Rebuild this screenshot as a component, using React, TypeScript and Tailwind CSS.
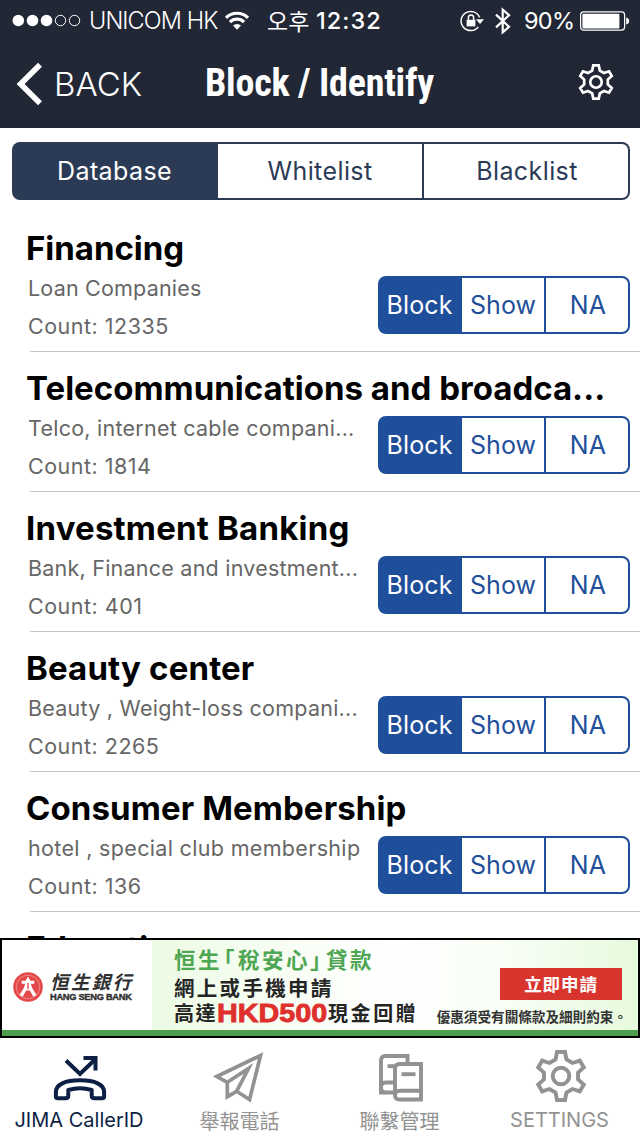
import type { ReactNode } from "react";

interface Category {
  title: string;
  detail: string;
  count: number;
  spacing: string;
  detailSpacing: string;
}

const categories: Category[] = [
  { title: "Financing", detail: "Loan Companies", count: 12335, spacing: "tracking-[-0.02px]", detailSpacing: "tracking-[0.2px]" },
  { title: "Telecommunications and broadca...", detail: "Telco, internet cable compani...", count: 1814, spacing: "tracking-[0.01px]", detailSpacing: "tracking-[0.24px]" },
  { title: "Investment Banking", detail: "Bank, Finance and investment...", count: 401, spacing: "tracking-[0.2px]", detailSpacing: "tracking-[0.23px]" },
  { title: "Beauty center", detail: "Beauty , Weight-loss compani...", count: 2265, spacing: "tracking-[0.15px]", detailSpacing: "tracking-[0.24px]" },
  { title: "Consumer Membership", detail: "hotel , special club membership", count: 136, spacing: "tracking-[0.1px]", detailSpacing: "tracking-[0.33px]" },
  { title: "Education", detail: "", count: 0, spacing: "tracking-[0.13px]", detailSpacing: "" },
];

const gearPoints = Array.from({ length: 6 }, (_, i) => {
  const a = (i * Math.PI) / 3;
  return [[-5.5, -16.5], [-4, -24], [4, -24], [5.5, -16.5]]
    .map(([x, y]) => `${(x * Math.cos(a) - y * Math.sin(a)).toFixed(2)},${(x * Math.sin(a) + y * Math.cos(a)).toFixed(2)}`)
    .join(" ");
}).join(" ");

function Gear({ className }: { className: string }) {
  return (
    <svg viewBox="-26 -26 52 52" className={className} fill="none" stroke="currentColor" strokeWidth="3.9">
      <polygon points={gearPoints} />
      <circle r="8.3" />
    </svg>
  );
}

function StatusBar() {
  return (
    <div className="flex h-[41px] items-center text-[23.5px] leading-[41px] text-white">
      <svg className="ml-3 h-[13px] w-[69px] shrink-0" viewBox="0 0 69 13">
        <g fill="#fff">
          <circle cx="6.3" cy="6.5" r="5.8" />
          <circle cx="20.5" cy="6.5" r="5.8" />
          <circle cx="34.5" cy="6.5" r="5.8" />
        </g>
        <g fill="none" stroke="#fff">
          <circle cx="48.5" cy="6.5" r="5.2" />
          <circle cx="62.5" cy="6.5" r="5.2" />
        </g>
      </svg>
      <span className="ml-[8px] w-[133px] shrink-0 whitespace-nowrap font-light tracking-[-0.9px]">UNICOM HK</span>
      <svg className="ml-[2px] h-[19px] w-[26px] shrink-0" viewBox="0 0 26 19" fill="none" stroke="#fff" strokeWidth="3.2">
        <path d="M2 6.800a15.600 15.600 0 0 1 22 0" />
        <path d="M5.900 11a10 10 0 0 1 14.200 0" />
        <path d="M13 18.800l-4-4.200a5.700 5.700 0 0 1 8 0z" fill="#fff" stroke="none" />
      </svg>
      <span className="ml-[17px] w-[49px] shrink-0 font-['Noto_Sans_CJK_KR'] text-[23px]">오후</span>
      <span className="w-[68px] shrink-0 font-medium tracking-[1.05px]">12:32</span>
      <svg className="ml-[75px] h-[24px] w-[26px] shrink-0" viewBox="0 0 26 24" fill="none" stroke="#fff" strokeWidth="1.5">
        <path d="M20.600 8.400a9.600 9.600 0 1 0-1.300 9.500" />
        <path d="M17 10.200h8l-4 4.700z" fill="#fff" stroke="none" />
        <path d="M7.600 10.800h8.800v6.600H7.600z" fill="#fff" stroke="none" />
        <path d="M9.400 11V8.600a2.600 2.600 0 0 1 5.200 0V11" />
      </svg>
      <svg className="ml-[9px] h-[28px] w-[17px] shrink-0" viewBox="0 0 17 28" fill="none" stroke="#fff" strokeWidth="2.2">
        <path d="M2 7.600l13 12.200-6.300 5.500V2.700l6.300 5.500L2 20.400" />
      </svg>
      <span className="ml-[13px] w-[55px] shrink-0 tracking-[-0.7px]">90%</span>
      <svg className="ml-[1px] h-[20px] w-[50px] shrink-0" viewBox="0 0 50 20">
        <rect x=".6" y=".9" width="44" height="18.2" rx="3" fill="none" stroke="#fff" strokeWidth="1.2" />
        <rect x="2.4" y="2.8" width="37" height="14.6" rx="1" fill="#fff" />
        <path d="M46.200 6.600q3 .8 3 3.400t-3 3.400z" fill="#fff" />
      </svg>
    </div>
  );
}

const segmentTheme = {
  tabs: {
    box: "w-[618px] text-[#2b3b56] tracking-[0.4px]",
    selected: "bg-[#2b3b56]",
    outline: "border-[#2b3b56]",
  },
  row: {
    box: "w-[252px] text-[#1f4f9a] tracking-[0.1px]",
    selected: "bg-[#1f4f9a]",
    outline: "border-[#1f4f9a]",
  },
};

function Segments({ labels, variant }: { labels: [string, string, string]; variant: "tabs" | "row" }) {
  const theme = segmentTheme[variant];
  return (
    <div className={`grid h-[58px] shrink-0 grid-cols-3 text-center text-[25px] leading-[58px] whitespace-nowrap ${theme.box}`}>
      <div className={`rounded-l-[8px] pr-px text-white ${theme.selected}`}>{labels[0]}</div>
      <div className={`border-y-2 border-r-2 leading-[54px] ${theme.outline}`}>{labels[1]}</div>
      <div className={`rounded-r-[8px] border-y-2 border-r-2 pl-[2px] leading-[54px] ${theme.outline}`}>{labels[2]}</div>
    </div>
  );
}

function Row({ item }: { item: Category }) {
  return (
    <section className="h-[140px] shrink-0 pt-4">
      <h2 className={`h-10 pl-[26px] text-[33px] leading-10 font-bold whitespace-nowrap text-black ${item.spacing}`}>{item.title}</h2>
      {item.detail && (
        <div className="flex h-[83px] justify-between pr-[10px] pl-[28px]">
          <div className="w-[340px] text-[21.5px] whitespace-nowrap text-[#666]">
            <p className={`h-[41px] leading-[41px] ${item.detailSpacing}`}>{item.detail}</p>
            <p className="leading-[35px] tracking-[0.5px]">Count: {item.count}</p>
          </div>
          <div className="pt-2">
            <Segments labels={["Block", "Show", "NA"]} variant="row" />
          </div>
        </div>
      )}
      <div className="ml-[30px] h-px bg-[#c4c4c6]" />
    </section>
  );
}

function Banner() {
  return (
    <div className="flex h-[100px] shrink-0 border-2 border-black bg-white font-['Noto_Sans_CJK_TC'] font-bold">
      <div className="flex w-full border-b-[6px] border-[#4d9f4d]">
        <div className="flex w-[150px] shrink-0 items-center pl-[11px]">
          <svg className="mt-1 h-[30px] w-[30px] shrink-0" viewBox="0 0 30 30">
            <circle cx="15" cy="15" r="14.8" fill="#e3494a" />
            <circle cx="15" cy="15" r="11.8" fill="none" stroke="#f08a89" strokeWidth="1" />
            <path d="M15 4.500l2.300 4.200h4v3h-3.400l1.100 4.100 4.500 7.300-3.200 1.600-3.400-6.200h-3.800l-3.400 6.200-3.200-1.600 4.500-7.300 1.100-4.100H8.700v-3h4z" fill="#fff" />
            <path d="M15 11v6" stroke="#e3494a" strokeWidth="1.4" />
          </svg>
          <div className="mt-[3px] ml-[7px] whitespace-nowrap text-[#303030]">
            <div className="text-[18.5px] leading-[22px] font-bold tracking-[2.4px] italic">恒生銀行</div>
            <div className="font-['Liberation_Sans'] text-[9.3px] leading-[11px] font-bold tracking-[-0.3px] [-webkit-text-stroke:0.4px_#303030]">HANG SENG BANK</div>
          </div>
        </div>
        <div className="flex grow justify-between bg-[linear-gradient(90deg,#ecfbe3_0%,#f5fdf0_20%,#ffffff_50%,#f7fef4_75%,#e6fadd_100%)] pl-[22px]">
          <div className="pt-[4px] whitespace-nowrap text-[#252525]">
            <div className="flex h-[29px] items-center text-[21.5px] leading-[29px] tracking-[2.5px] text-[#4fa653]">
              <span>恒生</span>
              <span className="-ml-[9px]">「</span>
              <span className="ml-px">稅安心</span>
              <span>」</span>
              <span className="-ml-[8px]">貸款</span>
            </div>
            <div className="h-[28px] text-[20.5px] leading-[28px] tracking-[2.3px]">網上或手機申請</div>
            <div className="flex h-[24px] items-center text-[20px] leading-[24px]">
              <span className="w-[43px] tracking-[1.4px]">高達</span>
              <span className="w-[111px] font-['Liberation_Sans'] text-[25px]">
                <span className="inline-block origin-left scale-x-[1.15] text-[#df302d] [-webkit-text-stroke:0.8px_#df302d]">HKD500</span>
              </span>
              <span className="tracking-[2.6px]">現金回贈</span>
            </div>
          </div>
          <div className="flex flex-col items-end pt-7 pr-[15px] whitespace-nowrap">
            <div className="mr-[1px] h-8 w-[122px] bg-[#d8352f] text-center text-[17.5px] leading-8 tracking-[0.9px] text-white">立即申請</div>
            <div className="mt-[6px] -mr-[4px] text-[13.6px] leading-[20px] text-[#333]">優惠須受有關條款及細則約束。</div>
          </div>
        </div>
      </div>
    </div>
  );
}

function Tab({ label, active, cjk, icon }: { label: string; active?: boolean; cjk?: boolean; icon: ReactNode }) {
  return (
    <div className={`flex h-[98px] flex-col items-center ${active ? "text-[#0d1f45]" : "text-[#929292]"}`}>
      <div className="flex h-[70px] w-full justify-center">{icon}</div>
      <div className={`whitespace-nowrap ${cjk ? "font-['Noto_Sans_CJK_TC'] text-[20px] leading-[25px]" : "text-[20px] leading-[24px]"} ${active ? "mr-[2px]" : "mr-px"}`}>{label}</div>
    </div>
  );
}

function TabBar() {
  return (
    <nav className="grid h-[98px] shrink-0 grid-cols-4 bg-white">
      <Tab
        active
        label="JIMA CallerID"
        icon={
          <svg className="mt-[16px] h-[48px] w-[54px]" viewBox="0 0 54 48" fill="none" stroke="currentColor" strokeWidth="4">
            <path d="M13 6.500L27 20 43 4.500" />
            <path d="M30.500 4H42.500V16.500" />
            <path d="M2.900 42.500V38C2.900 30.500 12 26.300 27 26.300S51.100 30.500 51.100 38V42.500Q51.100 44.300 49 44.300H41.500Q38.700 44.300 38.700 41.500V36Q27 32.500 15.300 36V41.500Q15.300 44.300 12.500 44.300H5Q2.900 44.300 2.900 42.500Z" strokeLinejoin="round" />
          </svg>
        }
      />
      <Tab
        cjk
        label="舉報電話"
        icon={
          <svg className="mt-[13px] mr-[2px] h-[54px] w-[52px]" viewBox="0 0 52 54" fill="none" stroke="currentColor" strokeWidth="3.7">
            <path d="M3.800 25.500L47.500 4.500 36.600 48.500 23.600 40.300 14.300 45.700V31.300Z" />
            <path d="M14.300 31.300L35.500 17.500 23.600 40.300" />
          </svg>
        }
      />
      <Tab
        cjk
        label="聯繫管理"
        icon={
          <svg className="mt-[15px] mr-[-2px] h-[50px] w-[46px]" viewBox="0 0 46 50" fill="none" stroke="currentColor" strokeWidth="3.9">
            <path d="M29.500 11V3H7.500Q3 3 3 7.500V39.500H16" />
            <path d="M16 29.500H7.500Q3 29.500 3 34.500Q3 39.500 7.500 39.500" />
            <path d="M9.500 13.200H18" />
            <path d="M43 11V46.500H21.500Q17 46.500 17 42.700V15.500Q17 11 21.500 11Z" />
            <path d="M43 37.800H21.500Q17 37.800 17 42.700" />
            <path d="M23.500 21.200H37.500" />
          </svg>
        }
      />
      <Tab label="SETTINGS" icon={<Gear className="mt-[12px] ml-[2px] h-[52px] w-[52px]" />} />
    </nav>
  );
}

export default function App() {
  return (
    <div className="flex h-[1136px] w-[640px] flex-col overflow-hidden bg-white font-[Inter,sans-serif]">
      <header className="h-32 shrink-0 bg-[#222735] text-white">
        <StatusBar />
        <div className="flex h-[87px] items-start">
          <svg className="mt-[21px] ml-[16px] h-[44px] w-[28px] shrink-0" viewBox="0 0 28 44" fill="none" stroke="#fff" strokeWidth="5.6">
            <path d="M24 2.800L4.600 22 24 41.200" />
          </svg>
          <span className="ml-[10px] h-[86px] w-[151px] text-[33px] leading-[86px] font-light">BACK</span>
          <h1 className="w-[373px] font-['Roboto_Condensed'] text-[38px] leading-[85px] font-bold tracking-[-0.2px] whitespace-nowrap">Block / Identify</h1>
          <Gear className="mt-[23px] h-[36px] w-[36px] shrink-0" />
        </div>
      </header>
      <div className="h-[84px] shrink-0 pt-[14px] pl-3">
        <Segments labels={["Database", "Whitelist", "Blacklist"]} variant="tabs" />
      </div>
      <main className="h-[726px] shrink-0 overflow-hidden">
        {categories.map((item) => (
          <Row key={item.title} item={item} />
        ))}
      </main>
      <Banner />
      <TabBar />
    </div>
  );
}
